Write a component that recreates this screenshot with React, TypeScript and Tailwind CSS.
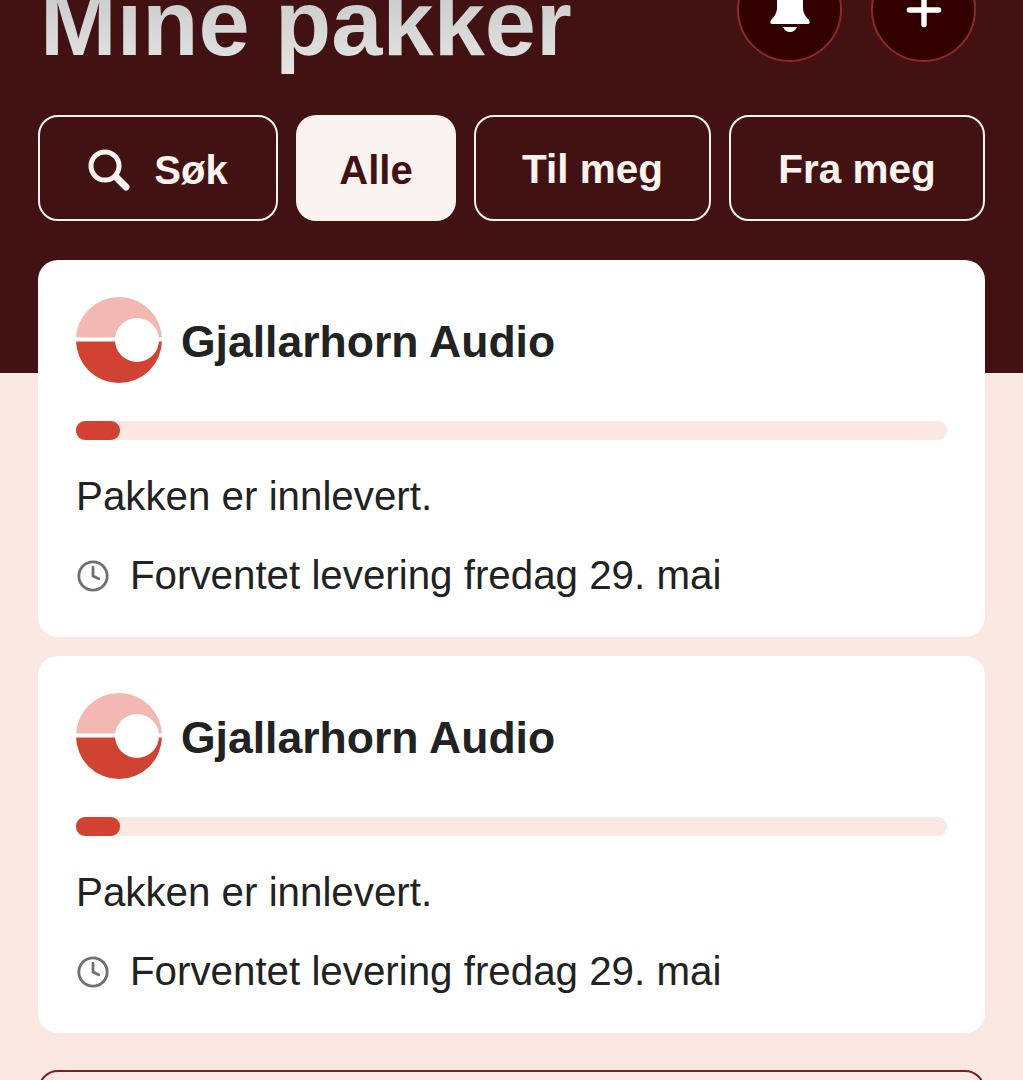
import React from "react";
import { Clock, Plus } from "lucide-react";

const filters = ["Søk", "Alle", "Til meg", "Fra meg"];

const Logo = () => (
  <svg viewBox="0 0 86 86" className="w-[86px] h-[86px] shrink-0">
    <path d="M0 43a43 43 0 0 1 86 0z" fill="#f4b8b2" />
    <path d="M0 43a43 43 0 0 0 86 0z" fill="#d24232" />
    <rect x="0" y="40.5" width="40" height="4" fill="#fff" />
    <rect x="78" y="40.5" width="8" height="4" fill="#fff" />
    <circle cx="61" cy="43" r="22" fill="#fff" />
  </svg>
);

const BellIcon = () => (
  <svg viewBox="0 0 40 60" className="w-10 h-[60px] -mt-[4px]" fill="#fff">
    <path d="M20 0c-9 0-13 7-13 16v14c0 5-3 9-6 12-1 2-1 4 1 4h36c2 0 2-2 1-4-3-3-6-7-6-12V16C33 7 29 0 20 0z" />
    <path d="M13 49h14c-1 3-4 5-7 5s-6-2-7-5z" />
  </svg>
);

const SearchIcon = () => (
  <svg viewBox="0 0 42 42" className="w-[42px] h-[42px] shrink-0" fill="none" stroke="currentColor" strokeLinecap="round">
    <circle cx="17" cy="17" r="14" strokeWidth="5" />
    <path d="M28 28l10 10" strokeWidth="7" />
  </svg>
);

const PackageCard = () => (
  <div className="bg-white rounded-[20px] px-[38px] pt-[37px] h-[377px]">
    <div className="flex items-center gap-[19px]">
      <Logo />
      <span className="pt-[4px] text-[44.5px] leading-[56px] font-bold text-[#222222]">Gjallarhorn Audio</span>
    </div>
    <div className="mt-[38px] h-[19px] rounded-[9px] bg-[#fbe8e2]">
      <div className="w-[44px] h-full rounded-[9px] bg-[#d24232]" />
    </div>
    <p className="mt-[33px] text-[40.3px] leading-[48px] text-[#222222]">Pakken er innlevert.</p>
    <div className="mt-[31px] flex items-center gap-[20px]">
      <Clock size={34} strokeWidth={2} className="text-[#6f6f6f] shrink-0" />
      <span className="text-[40.3px] leading-[48px] text-[#222222]">Forventet levering fredag 29. mai</span>
    </div>
  </div>
);

export default function App() {
  return (
    <div className="h-[1080px] w-[1023px] overflow-hidden font-['Liberation_Sans',Arial,sans-serif] bg-[linear-gradient(#421212_373px,#fbe8e2_373px)]">
      <header className="flex justify-between items-start pl-[40px] pr-[47px] -mt-[43px] h-[105px]">
        <h1 className="mt-[14px] text-[92px] leading-[105px] font-bold bg-[linear-gradient(#c4c4c4,#e6e6e6)] bg-clip-text text-transparent">
          Mine pakker
        </h1>
        <div className="flex gap-[29px]">
          <button className="w-[105px] h-[105px] rounded-full bg-[#330000] border-2 border-[#8c2a26] flex items-center justify-center">
            <BellIcon />
          </button>
          <button className="w-[105px] h-[105px] rounded-full bg-[#330000] border-2 border-[#8c2a26] flex items-center justify-center text-white">
            <Plus size={50} strokeWidth={2.6} />
          </button>
        </div>
      </header>

      <nav className="flex gap-[18px] px-[38px] mt-[53px] h-[106px]">
        {filters.map((f, i) => (
          <button
            key={f}
            className={
              f === "Alle"
                ? "w-[160px] pt-[3px] rounded-[20px] bg-[#fbf3ef] text-[#421212] text-[40px] font-bold"
                : i === 0
                ? "w-[240px] pt-[3px] rounded-[20px] border-[2.5px] border-[#fbf3ef] text-[#fbf3ef] text-[40px] font-bold flex items-center justify-center gap-[24px]"
                : i === 2
                ? "w-[237px] pt-[3px] rounded-[20px] border-[2.5px] border-[#fbf3ef] text-[#fbf3ef] text-[40.5px] font-bold"
                : "w-[256px] pt-[3px] rounded-[20px] border-[2.5px] border-[#fbf3ef] text-[#fbf3ef] text-[40.5px] font-bold"
            }
          >
            {i === 0 && <SearchIcon />}
            {f}
          </button>
        ))}
      </nav>

      <main className="px-[38px] mt-[39px] flex flex-col gap-[19px]">
        <PackageCard />
        <PackageCard />
        <div className="mt-[18px] h-[200px] rounded-[20px] border-2 border-[#7a1f1f]" />
      </main>
    </div>
  );
}
